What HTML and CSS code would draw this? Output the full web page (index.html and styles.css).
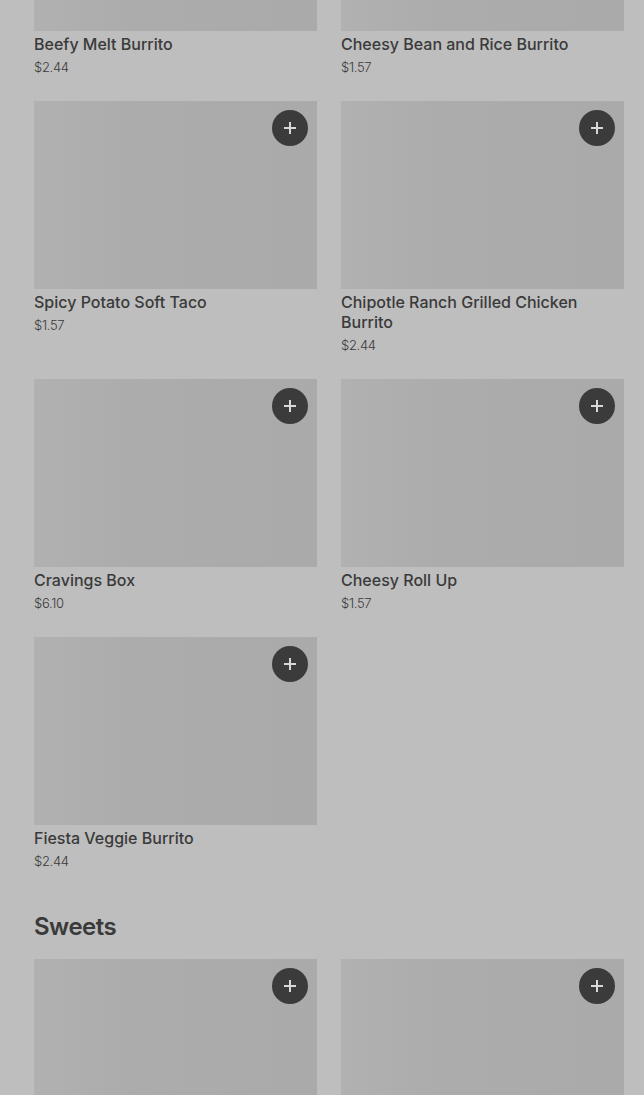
FILE: index.html
```html
<!DOCTYPE html>
<html>
<head>
    <meta name="viewport" content="width=device-width, initial-scale=1.0">
    <title>Menu</title>
    <link rel="stylesheet" href="styles.css">
</head>
<body>
    <div class="page">
        <!-- burritos (scrolled part) -->
        <div class="grid">
            <div class="item">
                <div class="pic"><span class="add"></span></div>
                <div class="name">Beefy Melt Burrito</div>
                <div class="price">$2.44</div>
            </div>
            <div class="item">
                <div class="pic"><span class="add"></span></div>
                <div class="name">Cheesy Bean and Rice Burrito</div>
                <div class="price">$1.57</div>
            </div>
            <div class="item">
                <div class="pic"><span class="add"></span></div>
                <div class="name">Spicy Potato Soft Taco</div>
                <div class="price">$1.57</div>
            </div>
            <div class="item">
                <div class="pic"><span class="add"></span></div>
                <div class="name">Chipotle Ranch Grilled Chicken Burrito</div>
                <div class="price">$2.44</div>
            </div>
            <div class="item">
                <div class="pic"><span class="add"></span></div>
                <div class="name">Cravings Box</div>
                <div class="price">$6.10</div>
            </div>
            <div class="item">
                <div class="pic"><span class="add"></span></div>
                <div class="name">Cheesy Roll Up</div>
                <div class="price">$1.57</div>
            </div>
            <div class="item">
                <div class="pic"><span class="add"></span></div>
                <div class="name">Fiesta Veggie Burrito</div>
                <div class="price">$2.44</div>
            </div>
        </div>

        <h2 class="cat">Sweets</h2>
        <div class="grid">
            <div class="item">
                <div class="pic"><span class="add"></span></div>
            </div>
            <div class="item">
                <div class="pic"><span class="add"></span></div>
            </div>
        </div>
    </div>
</body>
</html>
```
FILE: styles.css
```css
body {
    margin: 0;
    background-color: #bebebe;
    font-family: Inter, Roboto, "Liberation Sans", sans-serif;
    color: #3a3a3a;
    overflow: hidden;
}

.page {
    /* page is scrolled down a bit */
    margin-top: -157px;
    padding-left: 34px;
}

.grid {
    display: grid;
    grid-template-columns: 283px 283px;
    column-gap: 24px;
    row-gap: 24px;
}

.pic {
    position: relative;
    height: 188px;
    background: linear-gradient(90deg, #b1b1b1 0%, #acacac 35%, #aaaaaa 100%);
}

.add {
    position: absolute;
    top: 9px;
    right: 9px;
    width: 36px;
    height: 36px;
    border-radius: 50%;
    background-color: #3b3b3b;
}

.add::before,
.add::after {
    content: "";
    position: absolute;
    left: 50%;
    top: 50%;
    background-color: #d8d8d8;
}

.add::before {
    width: 12px;
    height: 2px;
    margin: -1px 0 0 -6px;
}

.add::after {
    width: 2px;
    height: 12px;
    margin: -6px 0 0 -1px;
}

.name {
    margin-top: 3px;
    font-size: 16px;
    font-weight: 500;
    line-height: 20px;
}

.price {
    margin-top: 3px;
    font-size: 13px;
    line-height: 20px;
    font-weight: 300;
    letter-spacing: -0.3px;
}

.cat {
    margin: 40px 0 16px;
    font-size: 24px;
    font-weight: 600;
    line-height: 32px;
    letter-spacing: -0.5px;
}
```
